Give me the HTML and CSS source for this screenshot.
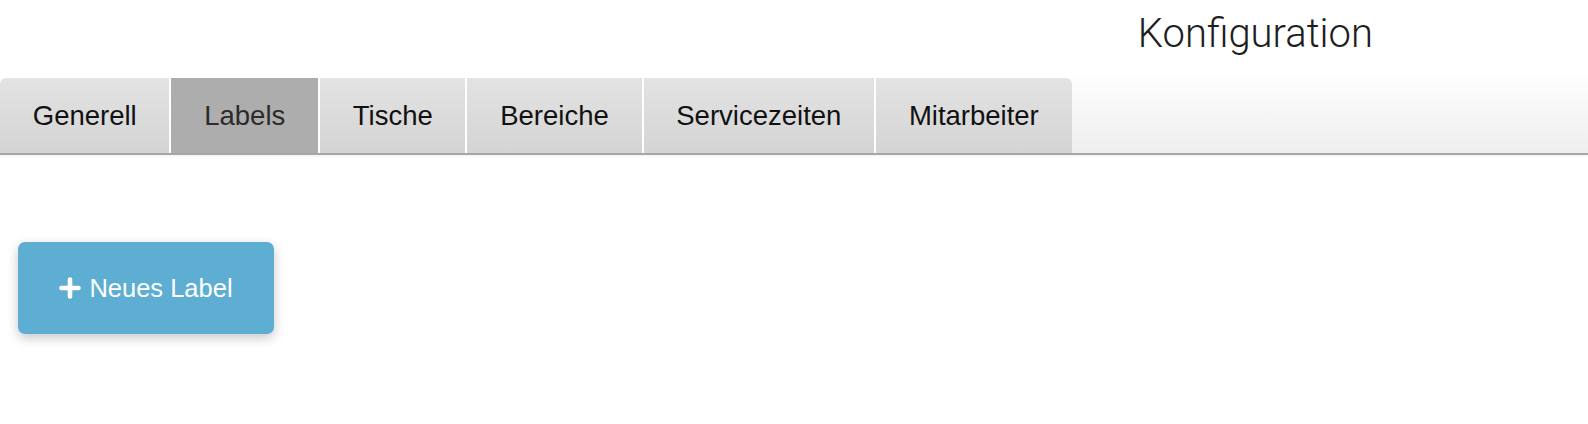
FILE: index.html
```html
<!DOCTYPE html>
<html lang="de">
<head>
<meta charset="utf-8">
<title>Konfiguration</title>
<link rel="stylesheet" href="styles.css">
</head>
<body>
<header class="page-head">
  <h1 class="page-title">Konfiguration</h1>
</header>
<nav class="tabs">
  <a class="tab">Generell</a>
  <a class="tab active">Labels</a>
  <a class="tab">Tische</a>
  <a class="tab">Bereiche</a>
  <a class="tab">Servicezeiten</a>
  <a class="tab">Mitarbeiter</a>
</nav>
<main class="content">
  <button class="btn-new" type="button">
    <svg class="btn-icon" width="22" height="22" viewBox="0 0 22 22" aria-hidden="true">
      <path d="M11 2.5V19.5M2.5 11H19.5" stroke="#fff" stroke-width="4.6" stroke-linecap="round" fill="none"/>
    </svg>
    <span>Neues Label</span>
  </button>
</main>
</body>
</html>
```

FILE: styles.css
```css
html, body {
  margin: 0;
  padding: 0;
  background: #fff;
  font-family: "Liberation Sans", Arial, sans-serif;
}

.page-head {
  display: flex;
  justify-content: flex-end;
  box-sizing: border-box;
  height: 78px;
  padding: 14px 215px 0 0;
}

.page-title {
  margin: 0;
  font-family: Roboto, "Liberation Sans", sans-serif;
  font-weight: 300;
  font-size: 40px;
  line-height: 40px;
  color: #1e1e1e;
}

.tabs {
  display: flex;
  background: linear-gradient(#fdfdfd, #eeeeee);
  border-bottom: 2px solid #a6a6a6;
  box-shadow: 0 2px 2px rgba(0, 0, 0, 0.04);
}

.tab {
  display: flex;
  align-items: center;
  height: 75px;
  padding: 0 32.75px;
  font-size: 27.5px;
  color: #111;
  background: linear-gradient(#e3e3e3, #d4d4d4);
  cursor: pointer;
}

.tab + .tab {
  border-left: 2px solid #fff;
}

.tab:first-child {
  border-top-left-radius: 6px;
}

.tab:last-child {
  border-top-right-radius: 6px;
}

.tab.active {
  background: #adadad;
  color: #2b2b2b;
}

.content {
  padding: 87px 18px 40px;
}

.btn-new {
  display: inline-flex;
  align-items: center;
  gap: 8px;
  box-sizing: border-box;
  width: 256px;
  height: 92px;
  padding: 0 40px;
  justify-content: center;
  border: none;
  border-radius: 7px;
  background: #5eaed3;
  color: #fff;
  font-family: "Liberation Sans", Arial, sans-serif;
  font-size: 25.5px;
  box-shadow: 0 4px 12px rgba(0, 0, 0, 0.22);
  cursor: pointer;
}

.btn-icon {
  display: block;
  flex: none;
}
```
